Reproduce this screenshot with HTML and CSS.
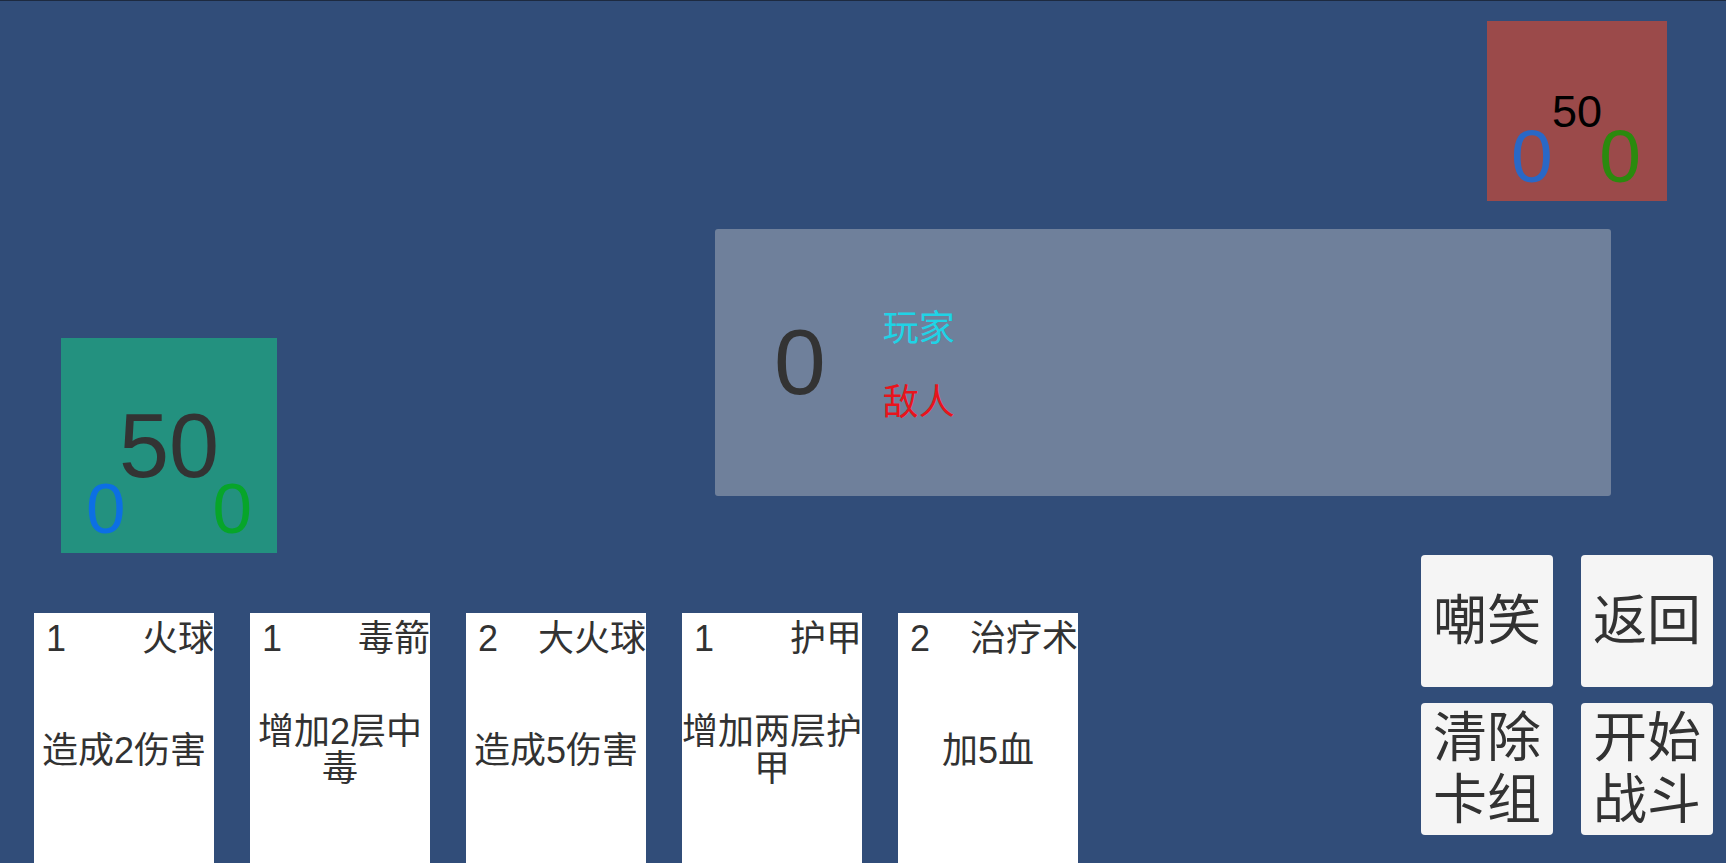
FILE: index.html
```html
<!DOCTYPE html>
<html lang="zh">
<head>
<meta charset="utf-8">
<title>Battle</title>
<link rel="stylesheet" href="styles.css">
</head>
<body>
<div class="stage">
  <div class="enemy-row">
    <div class="unit unit-enemy">
      <div class="unit-hp">50</div>
      <div class="unit-stats">
        <span class="stat-block">0</span>
        <span class="stat-poison">0</span>
      </div>
    </div>
  </div>

  <div class="mid-row">
    <div class="unit unit-player">
      <div class="unit-hp">50</div>
      <div class="unit-stats">
        <span class="stat-block">0</span>
        <span class="stat-poison">0</span>
      </div>
    </div>
    <div class="panel">
      <div class="panel-count">0</div>
      <div class="panel-labels">
        <div class="label-player">玩家</div>
        <div class="label-enemy">敌人</div>
      </div>
    </div>
  </div>

  <div class="bottom-row">
    <div class="hand">
      <div class="card">
        <div class="card-head"><span class="card-cost">1</span><span class="card-name">火球</span></div>
        <div class="card-desc"><span>造成2伤害</span></div>
      </div>
      <div class="card">
        <div class="card-head"><span class="card-cost">1</span><span class="card-name">毒箭</span></div>
        <div class="card-desc"><span>增加2层中毒</span></div>
      </div>
      <div class="card">
        <div class="card-head"><span class="card-cost">2</span><span class="card-name">大火球</span></div>
        <div class="card-desc"><span>造成5伤害</span></div>
      </div>
      <div class="card">
        <div class="card-head"><span class="card-cost">1</span><span class="card-name">护甲</span></div>
        <div class="card-desc"><span>增加两层护甲</span></div>
      </div>
      <div class="card">
        <div class="card-head"><span class="card-cost">2</span><span class="card-name">治疗术</span></div>
        <div class="card-desc"><span>加5血</span></div>
      </div>
    </div>
    <div class="actions">
      <div class="btn">嘲笑</div>
      <div class="btn">返回</div>
      <div class="btn">清除<br>卡组</div>
      <div class="btn">开始<br>战斗</div>
    </div>
  </div>
</div>
</body>
</html>
```

FILE: styles.css
```css
* { box-sizing: border-box; }

html, body {
  margin: 0;
  padding: 0;
  width: 1726px;
  height: 863px;
  overflow: hidden;
  background: #314d79;
}

body {
  font-family: "Liberation Sans", "Noto Sans CJK SC", sans-serif;
  color: #323232;
}

.stage {
  width: 1726px;
  height: 863px;
  border-top: 1px solid #1d2a40;
  overflow: hidden;
}

/* ---------- top row ---------- */
.enemy-row {
  display: flex;
  justify-content: flex-end;
  padding: 20px 59px 0 0;
}

.unit {
  display: flex;
  flex-direction: column;
  justify-content: flex-end;
  align-items: stretch;
}

.unit-hp {
  text-align: center;
  line-height: 1;
}

.unit-stats {
  display: flex;
  justify-content: space-between;
  line-height: 1;
}

.unit-enemy {
  width: 180px;
  height: 180px;
  background: #9b4a4a;
  padding: 0 26px 7px 24px;
}
.unit-enemy .unit-hp {
  font-size: 45px;
  color: #000;
  margin-bottom: -15px;
  padding-left: 2px;
}
.unit-enemy .unit-stats { font-size: 75px; }
.unit-enemy .stat-block { color: #2a68c6; }
.unit-enemy .stat-poison { color: #2b8a0e; }

/* ---------- middle row ---------- */
.mid-row {
  display: flex;
  align-items: flex-start;
  margin-top: 28px;
}

.unit-player {
  width: 216px;
  height: 215px;
  margin: 109px 0 0 61px;
  background: #23917f;
  padding: 0 25px 9px 25px;
}
.unit-player .unit-hp {
  font-size: 90px;
  color: #333;
  margin-bottom: -18px;
}
.unit-player .unit-stats { font-size: 71px; }
.unit-player .stat-block { color: #0c6fe4; }
.unit-player .stat-poison { color: #07a52a; }

.panel {
  width: 896px;
  height: 267px;
  margin-left: 438px;
  background: #6f809b;
  border-radius: 3px;
  display: flex;
  align-items: center;
  padding-left: 59px;
}

.panel-count {
  font-size: 93px;
  line-height: 1;
  color: #333;
}

.panel-labels {
  margin: 6px 0 0 57px;
  display: flex;
  flex-direction: column;
  gap: 38px;
  font-size: 36px;
  line-height: 36px;
}
.label-player { color: #1fd3e6; }
.label-enemy { color: #e8141c; }

/* ---------- bottom row ---------- */
.bottom-row {
  display: flex;
  justify-content: space-between;
  align-items: flex-start;
  margin-top: 2px;
  padding: 0 13px 0 34px;
}

.hand {
  display: flex;
  gap: 36px;
  margin-top: 58px;
}

.card {
  width: 180px;
  height: 260px;
  background: #fff;
  display: flex;
  flex-direction: column;
  padding-bottom: 32px;
}

.card-head {
  display: flex;
  justify-content: space-between;
  padding: 6px 0 0 12px;
  font-size: 36px;
  line-height: 40px;
  white-space: nowrap;
}

.card-desc {
  flex: 1;
  display: flex;
  align-items: center;
  justify-content: center;
  text-align: center;
  font-size: 36px;
  line-height: 37px;
}

.actions {
  display: grid;
  grid-template-columns: 132px 132px;
  grid-auto-rows: 132px;
  column-gap: 28px;
  row-gap: 16px;
}

.btn {
  background: #f5f5f5;
  border-radius: 4px;
  display: flex;
  align-items: center;
  justify-content: center;
  text-align: center;
  font-size: 54px;
  line-height: 62px;
  color: #323232;
}
```
